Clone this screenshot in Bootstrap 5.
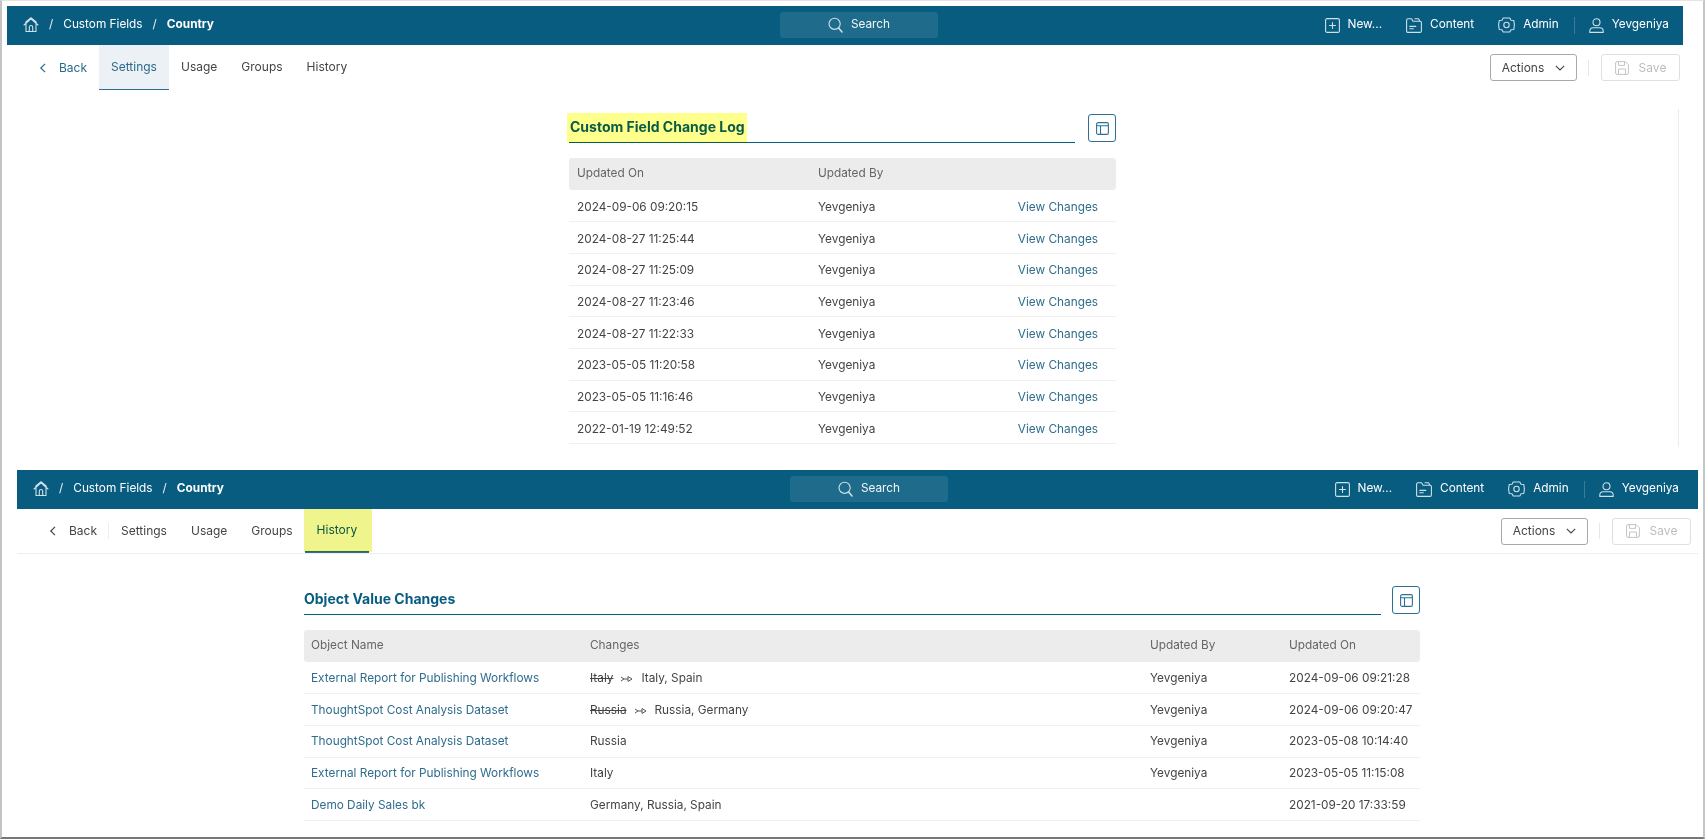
<!DOCTYPE html>
<html lang="en">
<head>
<meta charset="utf-8">
<title>Custom Field Change Log</title>
<link href="https://cdn.jsdelivr.net/npm/bootstrap@5.3.0/dist/css/bootstrap.min.css" rel="stylesheet">
<style>
html,body{height:100%;}
body{font-family:Inter,"Liberation Sans",sans-serif;font-size:11.8px;color:#444;background:#fff;overflow:hidden;margin:0;}
.frame{height:839px;border:solid #c4c4c4;border-width:1px 2px 2px 2px;border-top-color:#e4e4e4;border-bottom-color:#777;position:relative;padding-top:5px;}
.shot-a{margin-left:5px;width:1676px;height:436px;}
.shot-b{margin-left:15px;width:1681px;margin-top:28px;}
.topbar{height:39px;background:#085c80;color:#fff;font-size:11.8px;padding-bottom:1px;}
.crumbs{width:773px;padding-left:16px;gap:9px;}
.crumbs .cur{font-weight:700;}
.crumbs .sl{color:#e6eef2;margin:0 1px;}
.searchbox{width:158px;height:26px;background:#1f6b8b;border-radius:3px;gap:8px;color:#f2f6f8;}
.topnav{margin-left:auto;padding-right:14px;}
.shot-b .topnav{padding-right:19px;}
.topnav .it{gap:8px;margin-left:24px;}
.topnav .vsep{width:1px;height:17px;background:#3a7d99;margin-left:15px;margin-right:-10px;}
.topnav svg,.crumbs svg,.searchbox svg{stroke:#cfe0e8;fill:none;stroke-width:1.1;stroke-linecap:round;stroke-linejoin:round;}
.tabbar{height:45px;padding-left:31.5px;padding-right:3px;font-size:12px;color:#444;}
.tabbar.ruled{border-bottom:1px solid #efefef;}
.shot-b .tabbar{padding-right:7px;}
.backlink{gap:12.5px;width:60.5px;color:#2a6a8a;}
.ruled .backlink{color:#444;border-right:1px solid #eee;height:16px;}
.tabx{height:45px;padding:0 12px;display:flex;align-items:center;border-bottom:1px solid transparent;}
.tabx.on{border-bottom-color:#2b7196;background:#ebf1f5;color:#2a6a8a;}
.ruled .tabx{height:44px;}
.ruled .tabx.on{background:none;color:#085c80;border-bottom-width:2px;}
.btn-act{width:87px;height:27px;border:1px solid #a9a9a9;border-radius:3px;gap:11px;color:#444;background:#fff;font-size:12px;padding:0;}
.bar-sep{width:1px;height:16px;background:#e6e6e6;margin:0 12px 0 11px;}
.btn-sv{width:79px;height:27px;border:1px solid #dfdfdf;border-radius:3px;gap:10px;color:#bdbdbd;background:#fff;font-size:12px;padding:0;}
.sect{position:relative;}
.sect-a{width:547px;margin:24px 0 0 562px;}
.sect-b{width:1116px;margin:32px 0 0 287px;}
.head-row{height:29px;}
.ttl{flex:1;height:29px;border-bottom:1px solid #085c80;color:#085c80;font-weight:700;font-size:14px;line-height:26px;padding-left:1px;}
.sect-b .ttl{padding-left:0;}
.gridbtn{width:28px;height:28px;border:1px solid #2b7196;border-radius:3px;margin-left:13px;background:#fff;}
.sect-b .gridbtn{margin-left:11px;}
.gridbtn svg{stroke:#2b7196;fill:none;stroke-width:1.1;}
.tbl{margin:15px 0 0;table-layout:fixed;width:100%;font-size:11.8px;color:#444;--bs-table-bg:transparent;}
.tbl th{font-weight:400;background:#ececec;color:#666;height:32px;padding:0 0 0 8px;vertical-align:middle;border:0;}
.tbl td{height:31.7px;padding:2px 0 0 8px;vertical-align:middle;border-bottom:1px solid #f0f0f0;color:#444;box-shadow:none;}
.sect-a .tbl td{padding-top:4px;}
.tbl th:first-child{border-radius:3px 0 0 3px;}
.tbl th:last-child{border-radius:0 3px 3px 0;}
.ca1{width:241px;}.ca2{width:166px;}
.cb1{width:279px;}.cb2{width:560px;}.cb3{width:139px;}
.sect-b .tbl th,.sect-b .tbl td{padding-left:7px;}
.lnk{color:#2f6d8d;text-decoration:none;}
.old{text-decoration:line-through;}
.arrow{margin:0 8px;vertical-align:-1px;stroke:#555;fill:none;stroke-width:1;}
.rline{position:absolute;left:1676px;top:108px;width:1px;height:338px;background:#ececec;}
.hl{position:absolute;background:#ffff8c;mix-blend-mode:multiply;}
.hl-a{left:565px;top:112px;width:180px;height:30px;}
.hl-b{left:302px;top:508px;width:68px;height:43px;background:#f0f48c;}
.tbl td.text-r{text-align:right;padding-right:18px;}
</style>
</head>
<body>
<div class="frame">
  <div class="shot-a">
    <div class="topbar d-flex align-items-center">
      <div class="crumbs d-flex align-items-center">
        <svg width="16" height="16" viewBox="0 0 16 16"><path d="M1 8 8 1.8 15 8M3 6.6V14.5H13V6.6M2.6 5.2 8 .8 13.4 5.2M6.3 14.5V10.2a1.7 1.7 0 0 1 3.4 0V14.5"/></svg>
        <span class="sl">/</span><span>Custom Fields</span><span class="sl">/</span><span class="cur">Country</span>
      </div>
      <div class="searchbox d-flex align-items-center justify-content-center">
        <svg width="15" height="16" viewBox="0 0 15 16"><circle cx="6.6" cy="6.8" r="5.6"/><path d="m10.6 11 3.4 4" stroke-width="1.5"/></svg><span>Search</span>
      </div>
      <div class="topnav d-flex align-items-center">
        <div class="it d-flex align-items-center"><svg width="15" height="15" viewBox="0 0 15 15"><rect x=".6" y=".6" width="13.8" height="13.8" rx="1.5"/><path d="M7.5 4.5v6M4.5 7.5h6"/></svg><span>New...</span></div>
        <div class="it d-flex align-items-center"><svg width="16" height="15" viewBox="0 0 16 15"><path d="M.6 13V2.2c0-.8.6-1.4 1.4-1.4h3.6l1.4 2.4H14c.8 0 1.4.6 1.4 1.4V13c0 .8-.6 1.4-1.4 1.4H2c-.8 0-1.4-.6-1.4-1.4ZM9 .8h3.5l1.5 2.4M3.8 8.4h6M3.8 10.8h3.6"/></svg><span>Content</span></div>
        <div class="it d-flex align-items-center"><svg width="17" height="16" viewBox="0 0 17 16"><path d="M5.2 1h6.6l1.2 2.2 2.8.3L16.4 8l-.6 4.5-2.8.3L11.8 15H5.2L4 12.8l-2.8-.3L.6 8l.6-4.5 2.8-.3Z"/><circle cx="8.5" cy="8" r="2.7"/></svg><span>Admin</span></div>
        <span class="vsep"></span>
        <div class="it d-flex align-items-center"><svg width="15" height="15" viewBox="0 0 15 15"><circle cx="7.5" cy="4.3" r="3.5"/><path d="M.8 14.4v-1.3c0-2 1.5-3.3 3.4-3.3h6.6c1.9 0 3.4 1.3 3.4 3.3v1.3Z"/></svg><span>Yevgeniya</span></div>
      </div>
    </div>
    <div class="tabbar d-flex align-items-center">
      <div class="backlink d-flex align-items-center"><svg width="8" height="10" viewBox="0 0 8 10" fill="none" stroke="#2a6a8a" stroke-width="1.2"><path d="M6 .8 1.8 5 6 9.2"/></svg><span>Back</span></div>
      <div class="tabx on">Settings</div><div class="tabx">Usage</div><div class="tabx">Groups</div><div class="tabx">History</div>
      <div class="ms-auto d-flex align-items-center">
        <button class="btn btn-act d-flex align-items-center justify-content-center" type="button"><span>Actions</span><svg width="10" height="6" viewBox="0 0 10 6" fill="none" stroke="#444" stroke-width="1.1"><path d="M.8.8 5 5 9.2.8"/></svg></button>
        <span class="bar-sep"></span>
        <button class="btn btn-sv d-flex align-items-center justify-content-center" type="button"><svg width="14" height="14" viewBox="0 0 14 14" fill="none" stroke="#c4c4c4" stroke-width="1"><path d="M.6 2C.6 1.2 1.2.6 2 .6h8.2L13.4 3.8V12c0 .8-.6 1.4-1.4 1.4H2c-.8 0-1.4-.6-1.4-1.4ZM3.5.6v3.8h6V.6M3.5 13.4V8h7v5.4"/></svg><span>Save</span></button>
      </div>
    </div>
    <div class="sect sect-a">
      <div class="head-row d-flex">
        <div class="ttl">Custom Field Change Log</div>
        <div class="gridbtn d-flex align-items-center justify-content-center"><svg width="13" height="13" viewBox="0 0 13 13"><rect x=".6" y=".6" width="11.8" height="11.8" rx="1.5"/><path d="M.6 3.8h11.8M4.5 3.8v8.6"/></svg></div>
      </div>
      <table class="table tbl">
        <colgroup><col class="ca1"><col class="ca2"><col></colgroup>
        <thead><tr><th>Updated On</th><th>Updated By</th><th></th></tr></thead>
        <tbody>
          <tr><td>2024-09-06 09:20:15</td><td>Yevgeniya</td><td class="text-r"><a class="lnk" href="#">View Changes</a></td></tr>
          <tr><td>2024-08-27 11:25:44</td><td>Yevgeniya</td><td class="text-r"><a class="lnk" href="#">View Changes</a></td></tr>
          <tr><td>2024-08-27 11:25:09</td><td>Yevgeniya</td><td class="text-r"><a class="lnk" href="#">View Changes</a></td></tr>
          <tr><td>2024-08-27 11:23:46</td><td>Yevgeniya</td><td class="text-r"><a class="lnk" href="#">View Changes</a></td></tr>
          <tr><td>2024-08-27 11:22:33</td><td>Yevgeniya</td><td class="text-r"><a class="lnk" href="#">View Changes</a></td></tr>
          <tr><td>2023-05-05 11:20:58</td><td>Yevgeniya</td><td class="text-r"><a class="lnk" href="#">View Changes</a></td></tr>
          <tr><td>2023-05-05 11:16:46</td><td>Yevgeniya</td><td class="text-r"><a class="lnk" href="#">View Changes</a></td></tr>
          <tr><td>2022-01-19 12:49:52</td><td>Yevgeniya</td><td class="text-r"><a class="lnk" href="#">View Changes</a></td></tr>
        </tbody>
      </table>
    </div>
  </div>
  <div class="shot-b">
    <div class="topbar d-flex align-items-center">
      <div class="crumbs d-flex align-items-center">
        <svg width="16" height="16" viewBox="0 0 16 16"><path d="M1 8 8 1.8 15 8M3 6.6V14.5H13V6.6M2.6 5.2 8 .8 13.4 5.2M6.3 14.5V10.2a1.7 1.7 0 0 1 3.4 0V14.5"/></svg>
        <span class="sl">/</span><span>Custom Fields</span><span class="sl">/</span><span class="cur">Country</span>
      </div>
      <div class="searchbox d-flex align-items-center justify-content-center">
        <svg width="15" height="16" viewBox="0 0 15 16"><circle cx="6.6" cy="6.8" r="5.6"/><path d="m10.6 11 3.4 4" stroke-width="1.5"/></svg><span>Search</span>
      </div>
      <div class="topnav d-flex align-items-center">
        <div class="it d-flex align-items-center"><svg width="15" height="15" viewBox="0 0 15 15"><rect x=".6" y=".6" width="13.8" height="13.8" rx="1.5"/><path d="M7.5 4.5v6M4.5 7.5h6"/></svg><span>New...</span></div>
        <div class="it d-flex align-items-center"><svg width="16" height="15" viewBox="0 0 16 15"><path d="M.6 13V2.2c0-.8.6-1.4 1.4-1.4h3.6l1.4 2.4H14c.8 0 1.4.6 1.4 1.4V13c0 .8-.6 1.4-1.4 1.4H2c-.8 0-1.4-.6-1.4-1.4ZM9 .8h3.5l1.5 2.4M3.8 8.4h6M3.8 10.8h3.6"/></svg><span>Content</span></div>
        <div class="it d-flex align-items-center"><svg width="17" height="16" viewBox="0 0 17 16"><path d="M5.2 1h6.6l1.2 2.2 2.8.3L16.4 8l-.6 4.5-2.8.3L11.8 15H5.2L4 12.8l-2.8-.3L.6 8l.6-4.5 2.8-.3Z"/><circle cx="8.5" cy="8" r="2.7"/></svg><span>Admin</span></div>
        <span class="vsep"></span>
        <div class="it d-flex align-items-center"><svg width="15" height="15" viewBox="0 0 15 15"><circle cx="7.5" cy="4.3" r="3.5"/><path d="M.8 14.4v-1.3c0-2 1.5-3.3 3.4-3.3h6.6c1.9 0 3.4 1.3 3.4 3.3v1.3Z"/></svg><span>Yevgeniya</span></div>
      </div>
    </div>
    <div class="tabbar ruled d-flex align-items-center">
      <div class="backlink d-flex align-items-center"><svg width="8" height="10" viewBox="0 0 8 10" fill="none" stroke="#444" stroke-width="1.2"><path d="M6 .8 1.8 5 6 9.2"/></svg><span>Back</span></div>
      <div class="tabx">Settings</div><div class="tabx">Usage</div><div class="tabx">Groups</div><div class="tabx on">History</div>
      <div class="ms-auto d-flex align-items-center">
        <button class="btn btn-act d-flex align-items-center justify-content-center" type="button"><span>Actions</span><svg width="10" height="6" viewBox="0 0 10 6" fill="none" stroke="#444" stroke-width="1.1"><path d="M.8.8 5 5 9.2.8"/></svg></button>
        <span class="bar-sep"></span>
        <button class="btn btn-sv d-flex align-items-center justify-content-center" type="button"><svg width="14" height="14" viewBox="0 0 14 14" fill="none" stroke="#c4c4c4" stroke-width="1"><path d="M.6 2C.6 1.2 1.2.6 2 .6h8.2L13.4 3.8V12c0 .8-.6 1.4-1.4 1.4H2c-.8 0-1.4-.6-1.4-1.4ZM3.5.6v3.8h6V.6M3.5 13.4V8h7v5.4"/></svg><span>Save</span></button>
      </div>
    </div>
    <div class="sect sect-b">
      <div class="head-row d-flex">
        <div class="ttl">Object Value Changes</div>
        <div class="gridbtn d-flex align-items-center justify-content-center"><svg width="13" height="13" viewBox="0 0 13 13"><rect x=".6" y=".6" width="11.8" height="11.8" rx="1.5"/><path d="M.6 3.8h11.8M4.5 3.8v8.6"/></svg></div>
      </div>
      <table class="table tbl">
        <colgroup><col class="cb1"><col class="cb2"><col class="cb3"><col></colgroup>
        <thead><tr><th>Object Name</th><th>Changes</th><th>Updated By</th><th>Updated On</th></tr></thead>
        <tbody>
          <tr><td><a class="lnk" href="#">External Report for Publishing Workflows</a></td><td><span class="old">Italy</span><svg class="arrow" width="12" height="8" viewBox="0 0 12 8"><path d="M0 2 3 4 0 6M3 4h4M7 1.5 11 4 7 6.5Z"/></svg>Italy, Spain</td><td>Yevgeniya</td><td>2024-09-06 09:21:28</td></tr>
          <tr><td><a class="lnk" href="#">ThoughtSpot Cost Analysis Dataset</a></td><td><span class="old">Russia</span><svg class="arrow" width="12" height="8" viewBox="0 0 12 8"><path d="M0 2 3 4 0 6M3 4h4M7 1.5 11 4 7 6.5Z"/></svg>Russia, Germany</td><td>Yevgeniya</td><td>2024-09-06 09:20:47</td></tr>
          <tr><td><a class="lnk" href="#">ThoughtSpot Cost Analysis Dataset</a></td><td>Russia</td><td>Yevgeniya</td><td>2023-05-08 10:14:40</td></tr>
          <tr><td><a class="lnk" href="#">External Report for Publishing Workflows</a></td><td>Italy</td><td>Yevgeniya</td><td>2023-05-05 11:15:08</td></tr>
          <tr><td><a class="lnk" href="#">Demo Daily Sales bk</a></td><td>Germany, Russia, Spain</td><td></td><td>2021-09-20 17:33:59</td></tr>
        </tbody>
      </table>
    </div>
  </div>
  <div class="rline"></div>
  <div class="hl hl-a"></div>
  <div class="hl hl-b"></div>
</div>
<script src="https://cdn.jsdelivr.net/npm/bootstrap@5.3.0/dist/js/bootstrap.bundle.min.js"></script>
</body>
</html>
